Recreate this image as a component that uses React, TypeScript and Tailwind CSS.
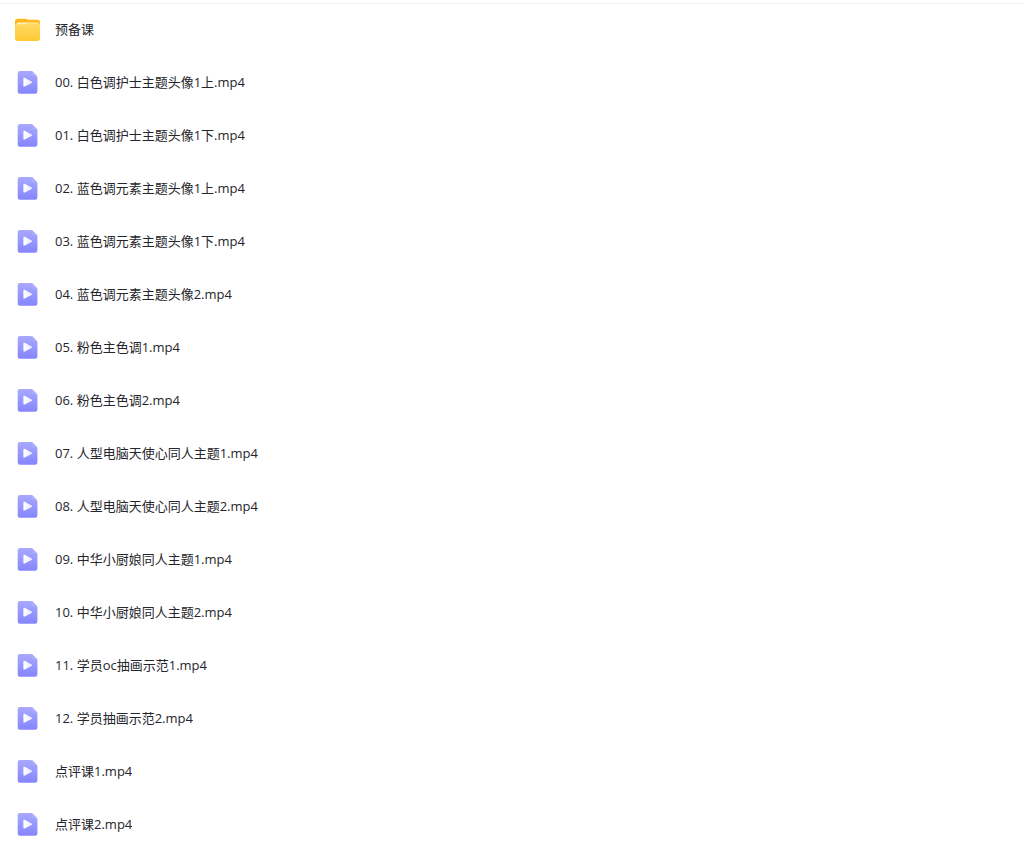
type FileItem = {
    name: string;
    type: 'folder' | 'video';
};

const files: FileItem[] = [
    { name: '预备课', type: 'folder' },
    { name: '00. 白色调护士主题头像1上.mp4', type: 'video' },
    { name: '01. 白色调护士主题头像1下.mp4', type: 'video' },
    { name: '02. 蓝色调元素主题头像1上.mp4', type: 'video' },
    { name: '03. 蓝色调元素主题头像1下.mp4', type: 'video' },
    { name: '04. 蓝色调元素主题头像2.mp4', type: 'video' },
    { name: '05. 粉色主色调1.mp4', type: 'video' },
    { name: '06. 粉色主色调2.mp4', type: 'video' },
    { name: '07. 人型电脑天使心同人主题1.mp4', type: 'video' },
    { name: '08. 人型电脑天使心同人主题2.mp4', type: 'video' },
    { name: '09. 中华小厨娘同人主题1.mp4', type: 'video' },
    { name: '10. 中华小厨娘同人主题2.mp4', type: 'video' },
    { name: '11. 学员oc抽画示范1.mp4', type: 'video' },
    { name: '12. 学员抽画示范2.mp4', type: 'video' },
    { name: '点评课1.mp4', type: 'video' },
    { name: '点评课2.mp4', type: 'video' },
];

const FolderIcon = () => (
    <svg viewBox="0 0 28 28" className="size-7 shrink-0" aria-hidden="true">
        <defs>
            <linearGradient id="folderFront" x1="0" y1="0" x2="0" y2="1">
                <stop offset="0" stopColor="#ffdb66" />
                <stop offset="1" stopColor="#ffc832" />
            </linearGradient>
        </defs>
        <path d="M1 6a2.200 2.200 0 0 1 2.200-2.200h8.300c.8 0 1.400.2 2 .5l1 .5h9.300A2.200 2.200 0 0 1 26 7V14H1z" fill="#ffb91f" />
        <path d="M2.500 9.500a2 2 0 0 1 2-2h18.500a2 2 0 0 1 2 2v2h-22.500z" fill="#fff0b8" />
        <path d="M1 11.200a2 2 0 0 1 2-2h8.300c.6 0 1-.1 1.500-.4l.5-.2c.4-.2.8-.3 1.300-.3H24a2 2 0 0 1 2 2v13.300a2.300 2.300 0 0 1-2.300 2.300H3.300A2.300 2.300 0 0 1 1 23.600z" fill="url(#folderFront)" />
    </svg>
)

const VideoIcon = () => (
    <svg viewBox="0 0 28 28" className="size-7 shrink-0" aria-hidden="true">
        <defs>
            <linearGradient id="videoPage" x1="0" y1="0" x2="0" y2="1">
                <stop offset="0" stopColor="#a9a9ff" />
                <stop offset="1" stopColor="#8585ff" />
            </linearGradient>
            <linearGradient id="videoPlay" x1="0" y1="0" x2="1" y2="0">
                <stop offset="0" stopColor="#ffffff" />
                <stop offset="1" stopColor="#e9e9ff" />
            </linearGradient>
        </defs>
        <path d="M3.700 5.200A2.300 2.300 0 0 1 6 2.900h10.900c.7 0 1.300.3 1.800.8l3.900 4c.5.500.8 1.100.8 1.800v13.900a2.300 2.300 0 0 1-2.300 2.300H6a2.300 2.300 0 0 1-2.300-2.300z" fill="url(#videoPage)" />
        <path d="M17.900 3.100c.3.100.6.300.8.600l3.900 4c.3.300.5.600.6.900h-3.300a2 2 0 0 1-2-2z" fill="#ababff" />
        <path d="M9.400 10.600c0-.7.700-1.100 1.300-.8l6.900 3.600c.6.400.6 1.200 0 1.600l-6.900 3.600c-.6.300-1.300-.1-1.300-.8z" fill="url(#videoPlay)" />
    </svg>
)

const FileRow = ({ file }: { file: FileItem }) => (
    <li>
        <a href="#" className="flex h-[53px] items-center gap-[13px] px-3.5">
            { file.type === 'folder' ? <FolderIcon /> : <VideoIcon /> }
            <span className="truncate">{ file.name }</span>
        </a>
    </li>
)

const App = () => {
    return (
        <main className="min-h-screen bg-white text-[13px] leading-5 text-[#25262b] font-['Open_Sans','Noto_Sans_CJK_SC',sans-serif]">
            <div className="h-1 border-b border-[#f2f2f4]" />
            <ul className="-mt-0.5">
                {files.map((file) => (
                    <FileRow key={ file.name } file={ file } />
                ))}
            </ul>
        </main>
    )
}

export default App
